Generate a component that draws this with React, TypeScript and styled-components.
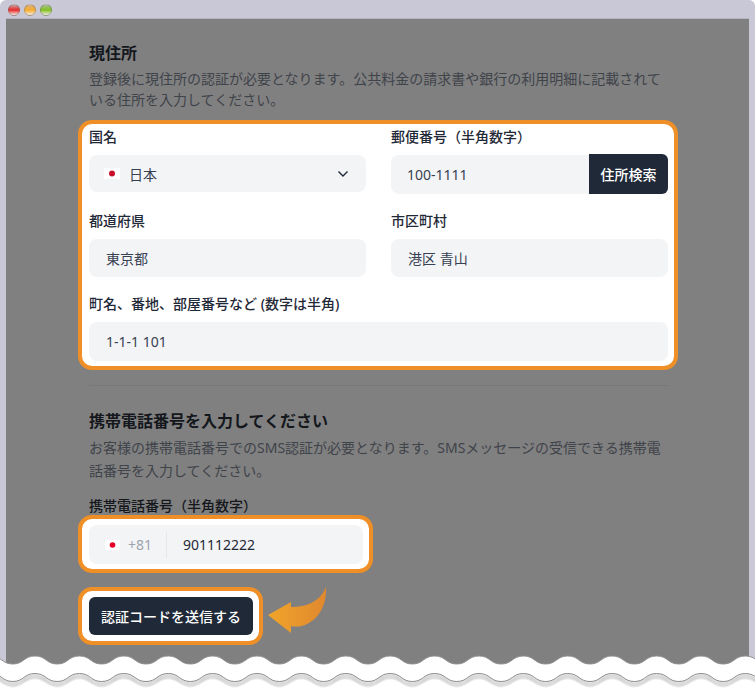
import { createGlobalStyle, styled } from 'styled-components';

const GlobalStyle = createGlobalStyle`
  html, body {
    margin: 0;
    padding: 0;
    background: #ffffff;
  }
  body {
    font-family: "Noto Sans", "Noto Sans CJK JP", sans-serif;
  }
`;

const Window = styled.div`
  position: relative;
  width: 755px;
  height: 690px;
  overflow: hidden;
  background: #c8c8d6;
  border-radius: 6px 6px 0 0;
`;

const TitleBar = styled.div`
  display: flex;
  align-items: center;
  gap: 4px;
  height: 18px;
  padding-left: 8px;
  padding-top: 1px;
  box-sizing: border-box;
`;

const Light = styled.span<{ $top: string; $mid: string }>`
  width: 12px;
  height: 12px;
  border-radius: 50%;
  box-sizing: border-box;
  border: 1px solid rgba(90, 90, 100, 0.35);
  background: linear-gradient(
    ${(p) => p.$top} 0%,
    ${(p) => p.$mid} 50%,
    #f4ece4 100%
  );
`;

const Dimmed = styled.main`
  height: 672px;
  margin: 0 6px;
  padding: 0 81px 0 83px;
  background: #808080;
  border-top: 1px solid #b4b4c2;
  box-sizing: border-box;
`;

const Heading = styled.h2`
  margin: 0;
  font-size: 16px;
  line-height: 24px;
  font-weight: 700;
  color: #14171c;
`;

const Lead = styled.p<{ $lh: number }>`
  margin: 3px 0 0;
  font-size: 14px;
  line-height: ${(p) => p.$lh}px;
  color: #3f434a;
`;

const AddressSection = styled.section`
  padding-top: 22px;
`;

const PhoneSection = styled.section`
  padding-top: 23px;
`;

const Spotlight = styled.div`
  background: #ffffff;
  border: 4px solid #ee8f27;
  border-radius: 14px;
  box-sizing: border-box;
`;

const AddressCard = styled(Spotlight)`
  display: grid;
  grid-template-columns: 277px 277px;
  column-gap: 25px;
  row-gap: 17px;
  margin: 10px -10px 0 -11px;
  padding: 3px 6px 5px 7px;
`;

const Field = styled.div<{ $wide?: boolean }>`
  display: flex;
  flex-direction: column;
  gap: 8px;
  grid-column: ${(p) => (p.$wide ? '1 / -1' : 'auto')};
`;

const Label = styled.label<{ $dim?: boolean }>`
  font-size: 14px;
  line-height: 20px;
  font-weight: 500;
  color: ${(p) => (p.$dim ? '#14171c' : '#1f2937')};
`;

const Input = styled.div<{ $h?: number }>`
  display: flex;
  align-items: center;
  height: ${(p) => p.$h ?? 38}px;
  padding: 0 17px;
  background: #f3f4f6;
  border-radius: 8px;
  font-size: 14px;
  color: #374151;
  box-sizing: border-box;
`;

const SelectBox = styled(Input)`
  gap: 9px;
  padding-left: 15px;
  padding-right: 17px;
`;

const SelectValue = styled.span`
  flex: 1;
`;

const FlagBox = styled.svg`
  display: block;
  flex: none;
`;

const ZipGroup = styled.div`
  display: flex;
  height: 39px;
`;

const ZipInput = styled(Input)`
  flex: 1;
  height: 39px;
  border-radius: 8px 0 0 8px;
  padding-left: 16px;
`;

const SearchButton = styled.button`
  width: 79px;
  height: 40px;
  margin-top: -1px;
  padding: 0;
  border: 0;
  border-radius: 0 6px 6px 0;
  background: #1f2937;
  color: #ffffff;
  font: 500 14px "Noto Sans", "Noto Sans CJK JP", sans-serif;
`;

const Divider = styled.hr`
  margin: 15px 0 0;
  border: 0;
  border-top: 1px solid #787878;
`;

const PhoneLabel = styled(Label)`
  display: block;
  margin: 14px 0 -1px;
`;

const PhoneCard = styled(Spotlight)`
  width: 295px;
  margin-left: -11px;
  padding: 6px 6px 5px 7px;
`;

const PhoneInput = styled.div`
  display: flex;
  align-items: center;
  height: 39px;
  padding-left: 16px;
  background: #f3f4f6;
  border-radius: 8px;
  font-size: 14px;
`;

const DialCode = styled.span`
  margin-left: 8px;
  width: 38px;
  color: #9ca3af;
`;

const PhoneSeparator = styled.span`
  width: 1px;
  height: 26px;
  background: #e5e7eb;
`;

const PhoneNumber = styled.span`
  margin-left: 16px;
  color: #1f2937;
`;

const ActionRow = styled.div`
  position: relative;
  margin-top: 14px;
`;

const ButtonCard = styled(Spotlight)`
  width: 185px;
  margin-left: -11px;
  padding: 6px 6px 6px 7px;
`;

const SubmitButton = styled.button`
  display: block;
  width: 100%;
  height: 38px;
  padding: 0;
  border: 0;
  border-radius: 6px;
  background: #1f2937;
  color: #ffffff;
  font: 500 14px "Noto Sans", "Noto Sans CJK JP", sans-serif;
`;

const ArrowMark = styled.svg`
  position: absolute;
  left: 178px;
  top: -1px;
`;

const TornEdge = styled.svg`
  position: absolute;
  left: 0;
  bottom: 0;
  display: block;
`;

const JapanFlag = ({ red, w, h }: { red: string; w: number; h: number }) => (
  <FlagBox width={w} height={h} viewBox="0 0 16 11" preserveAspectRatio="none">
    <rect width="16" height="11" fill="#ffffff" />
    <circle cx="8" cy="5.5" r="3" fill={red} />
  </FlagBox>
);

const wavePath = (y: number) => {
  // crests every 44.4px, first one at x=35
  const step = 44.4;
  const h = 8;
  let x = 35 - step * 1.5;
  let d = `M${x} ${y + h}`;
  while (x < 800) {
    d += ` C${x + 11} ${y + h} ${x + 11} ${y} ${x + step / 2} ${y}`;
    d += ` C${x + step - 11} ${y} ${x + step - 11} ${y + h} ${x + step} ${y + h}`;
    x += step;
  }
  return d;
};

const TornPaper = () => (
  <TornEdge width="755" height="38" viewBox="0 652 755 38">
    <path
      d={`${wavePath(656)} L820 700 L-60 700 Z`}
      fill="#ffffff"
      stroke="#909090"
      strokeWidth="1"
    />
    {[5, 4, 3, 2, 1].map((dy) => (
      <path
        key={dy}
        d={wavePath(673.5 + dy)}
        fill="none"
        stroke="#8a8a8a"
        strokeOpacity={0.16}
        strokeWidth="2"
      />
    ))}
    <path d={wavePath(673.5)} fill="none" stroke="#8c8c8c" strokeWidth="1" />
  </TornEdge>
);

export default function App() {
  return (
    <>
      <GlobalStyle />
      <Window>
        <TitleBar>
          <Light $top="#c9a0a0" $mid="#e82828" />
          <Light $top="#d8b080" $mid="#f8ac2c" />
          <Light $top="#a8c090" $mid="#82c020" />
        </TitleBar>
        <Dimmed>
          <AddressSection>
            <Heading>現住所</Heading>
            <Lead $lh={21}>
              登録後に現住所の認証が必要となります。公共料金の請求書や銀行の利用明細に記載されている住所を入力してください。
            </Lead>
            <AddressCard>
              <Field>
                <Label>国名</Label>
                <SelectBox $h={37}>
                  <JapanFlag red="#c8102e" w={16} h={11} />
                  <SelectValue>日本</SelectValue>
                  <svg width="12" height="8" viewBox="0 0 12 8" fill="none">
                    <path d="M1.5 1.5 6 6l4.5-4.5" stroke="#1f2937" strokeWidth="1.4" />
                  </svg>
                </SelectBox>
              </Field>
              <Field>
                <Label>郵便番号（半角数字）</Label>
                <ZipGroup>
                  <ZipInput>100-1111</ZipInput>
                  <SearchButton>住所検索</SearchButton>
                </ZipGroup>
              </Field>
              <Field>
                <Label>都道府県</Label>
                <Input>東京都</Input>
              </Field>
              <Field>
                <Label>市区町村</Label>
                <Input>港区 青山</Input>
              </Field>
              <Field $wide>
                <Label>町名、番地、部屋番号など (数字は半角)</Label>
                <Input $h={39}>1-1-1 101</Input>
              </Field>
            </AddressCard>
            <Divider />
          </AddressSection>
          <PhoneSection>
            <Heading>携帯電話番号を入力してください</Heading>
            <Lead $lh={23}>
              お客様の携帯電話番号でのSMS認証が必要となります。SMSメッセージの受信できる携帯電話番号を入力してください。
            </Lead>
            <PhoneLabel $dim>携帯電話番号（半角数字）</PhoneLabel>
            <PhoneCard>
              <PhoneInput>
                <JapanFlag red="#e60026" w={15} h={10} />
                <DialCode>+81</DialCode>
                <PhoneSeparator />
                <PhoneNumber>901112222</PhoneNumber>
              </PhoneInput>
            </PhoneCard>
            <ActionRow>
              <ButtonCard>
                <SubmitButton>認証コードを送信する</SubmitButton>
              </ButtonCard>
              <ArrowMark width="62" height="50" viewBox="267 586 62 50">
                <defs>
                  <linearGradient id="arrowFill" x1="0" y1="0" x2="1" y2="0">
                    <stop offset="0" stopColor="#f0a52a" />
                    <stop offset="1" stopColor="#e0882e" />
                  </linearGradient>
                </defs>
                <path
                  d="M268 615 L291 602 L291 607 C306 607 320 602 326 587 C327 603 320 618 307 624 C301 627 296 627 291 626 L291 633 Z"
                  fill="url(#arrowFill)"
                />
              </ArrowMark>
            </ActionRow>
          </PhoneSection>
        </Dimmed>
        <TornPaper />
      </Window>
    </>
  );
}
